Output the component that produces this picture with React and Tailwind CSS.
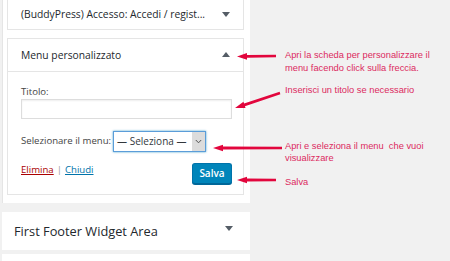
import React from "react";

const Down = ({ className = "" }) => (
  <svg width="8" height="5" viewBox="0 0 8 5" className={className}>
    <polygon points="0,0 8,0 4,5" fill="#555d66" />
  </svg>
);
const Up = ({ className = "" }) => (
  <svg width="8" height="5" viewBox="0 0 8 5" className={className}>
    <polygon points="0,5 8,5 4,0" fill="#555d66" />
  </svg>
);

function Arrow({ x1, y1, x2, y2 }) {
  const dx = x2 - x1;
  const dy = y2 - y1;
  const len = Math.sqrt(dx * dx + dy * dy);
  const ux = dx / len;
  const uy = dy / len;
  const px = -uy;
  const py = ux;
  const hl = 10;
  const hw = 3.3;
  const sw = 1.4;
  const bx = x2 - ux * hl;
  const by = y2 - uy * hl;
  const pts = [
    [x1 + px * sw * 0.85, y1 + py * sw * 0.85],
    [bx + px * sw, by + py * sw],
    [bx + px * hw, by + py * hw],
    [x2, y2],
    [bx - px * hw, by - py * hw],
    [bx - px * sw, by - py * sw],
    [x1 - px * sw * 0.85, y1 - py * sw * 0.85],
  ]
    .map((p) => p.map((v) => v.toFixed(2)).join(","))
    .join(" ");
  return <polygon points={pts} fill="#e2063d" />;
}

export default function App() {
  const font = { fontFamily: '"Open Sans", "Noto Sans", sans-serif' };
  const ann = { fontFamily: '"Liberation Sans", Arial, sans-serif' };
  return (
    <div
      className="relative w-[450px] h-[261px] overflow-hidden bg-[#f1f1f1]"
      style={font}
    >
      <div className="flex flex-col w-[250px] pl-[2px]">
        <div className="bg-white border-l border-[#e5e5e5] pl-[4px] pr-[6px] pb-[8px] -mt-[10px]">
          <div className="h-[40px] border border-[#e5e5e5] bg-white flex items-end pb-[8px] pl-[13px] pr-[13px]">
            <span className="flex-1 text-[10.3px] leading-[14px] text-[#23282d]">
              (BuddyPress) Accesso: Accedi / regist...
            </span>
            <Down className="mb-[4px]" />
          </div>
          <div className="mt-[8px] border border-[#e5e5e5] bg-white">
            <div className="h-[33px] flex items-center pl-[13px] pr-[13px] border-b border-[#e5e5e5]">
              <span className="flex-1 text-[10.3px] text-[#23282d] mt-[1px]">
                Menu personalizzato
              </span>
              <Up className="-mt-[1px]" />
            </div>
            <div className="pl-[13px] pr-[11px] pt-[14px] pb-[10px] text-[9.6px] text-[#444]">
              <div className="h-[12px] leading-[12px]">Titolo:</div>
              <div className="mt-[1px] h-[20px] w-[211px] border border-[#ddd] bg-white shadow-[inset_0_1px_2px_rgba(0,0,0,0.07)]" />
              <div className="mt-[12px] flex items-center h-[21px]">
                <span className="mr-[2px]">Selezionare il menu:</span>
                <div className="flex h-[21px] w-[93px] border border-[#5b9dd9] shadow-[0_0_2px_rgba(30,140,190,0.8)] bg-white">
                  <span className="flex-1 pl-[3px] leading-[19px] text-[#32373c] text-[10px] whitespace-nowrap">
                    — Seleziona —
                  </span>
                  <div className="w-[13px] bg-[#dcdcdc] flex items-center justify-center">
                    <svg width="7" height="5" viewBox="0 0 7 5">
                      <polyline
                        points="0.8,1 3.5,3.8 6.2,1"
                        fill="none"
                        stroke="#555"
                        strokeWidth="1"
                      />
                    </svg>
                  </div>
                </div>
              </div>
              <div className="mt-[11px] flex items-start">
                <div className="flex-1 leading-[14px]">
                  <span className="text-[#a00] underline">Elimina</span>
                  <span className="text-[#999] mx-[3px]">|</span>
                  <span className="text-[#0073aa] underline">Chiudi</span>
                </div>
                <div className="h-[21px] w-[40px] rounded-[3px] bg-[#0085ba] border border-[#0073aa] border-b-[#006799] flex items-center justify-center text-white font-semibold text-[10px] shadow-[0_1px_0_#006799]">
                  Salva
                </div>
              </div>
            </div>
          </div>
        </div>
        <div className="mt-[9px] h-[38px] bg-white flex items-center pl-[12px] pr-[17px]">
          <span className="flex-1 text-[12.8px] text-[#23282d] mt-[2px]">
            First Footer Widget Area
          </span>
          <Down className="-mt-[5px]" />
        </div>
        <div className="mt-[4px] h-[20px] bg-white" />
      </div>

      <svg
        className="absolute left-0 top-0"
        width="450"
        height="261"
        viewBox="0 0 450 261"
      >
        <Arrow x1={276} y1={56} x2={237} y2={56.5} />
        <Arrow x1={280} y1={93} x2={235} y2={108} />
        <Arrow x1={282} y1={148} x2={213} y2={148} />
        <Arrow x1={276} y1={180} x2={237} y2={180} />
      </svg>
      <div
        className="absolute left-[285px] top-[49px] text-[9.3px] leading-[12.5px] text-[#dc2a5f]"
        style={ann}
      >
        <div>Apri la scheda per personalizzare il</div>
        <div>menu facendo click sulla freccia.</div>
      </div>
      <div
        className="absolute left-[285px] top-[84px] text-[9.3px] leading-[12.5px] text-[#dc2a5f]"
        style={ann}
      >
        Inserisci un titolo se necessario
      </div>
      <div
        className="absolute left-[285px] top-[141px] text-[9.3px] leading-[11.5px] text-[#dc2a5f] whitespace-pre"
        style={ann}
      >
        <div>Apri e seleziona il menu  che vuoi</div>
        <div>visualizzare</div>
      </div>
      <div
        className="absolute left-[285px] top-[176px] text-[9.3px] leading-[12.5px] text-[#dc2a5f]"
        style={ann}
      >
        Salva
      </div>
    </div>
  );
}
